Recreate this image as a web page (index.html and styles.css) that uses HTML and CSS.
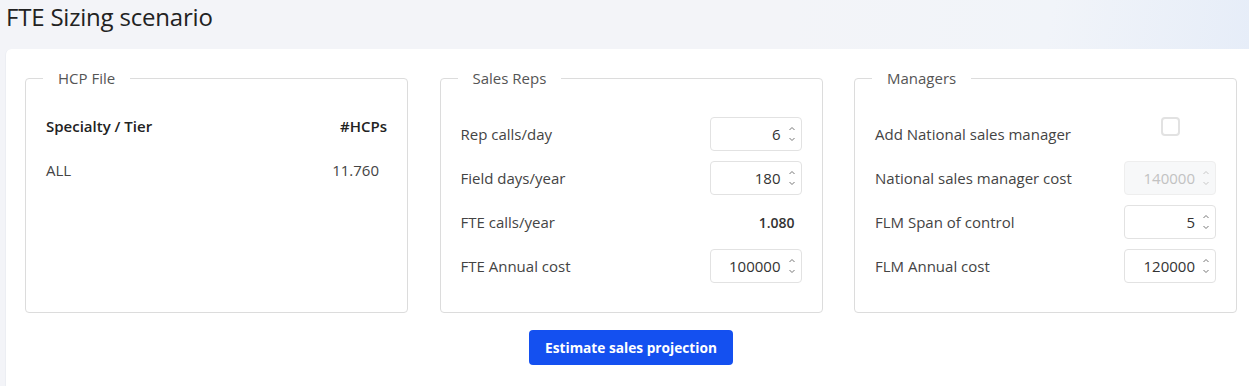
FILE: index.html
```html
<!DOCTYPE html>
<html>
<head>
<meta charset="utf-8">
<link rel="stylesheet" href="styles.css">
</head>
<body>
<div class="page">
  <header class="page-header"><h1 class="title">FTE Sizing scenario</h1></header>
  <main class="card">
    <div class="groups">
      <fieldset class="group">
        <legend class="legend">HCP File</legend>
        <div class="hcp">
          <div class="hcp-row hcp-head"><span>Specialty / Tier</span><span>#HCPs</span></div>
          <div class="hcp-row"><span>ALL</span><span class="hcp-num">11.760</span></div>
        </div>
      </fieldset>
      <fieldset class="group">
        <legend class="legend">Sales Reps</legend>
        <div class="rows">
          <div class="row"><span class="label">Rep calls/day</span><div class="num-input"><span class="val">6</span><span class="spin"><svg viewBox="0 0 8 20" width="8" height="20"><path d="M1.5 6 L4 3.5 L6.5 6" /><path d="M1.5 14 L4 16.5 L6.5 14" /></svg></span></div></div>
          <div class="row"><span class="label">Field days/year</span><div class="num-input"><span class="val">180</span><span class="spin"><svg viewBox="0 0 8 20" width="8" height="20"><path d="M1.5 6 L4 3.5 L6.5 6" /><path d="M1.5 14 L4 16.5 L6.5 14" /></svg></span></div></div>
          <div class="row"><span class="label">FTE calls/year</span><span class="static-val">1.080</span></div>
          <div class="row"><span class="label">FTE Annual cost</span><div class="num-input"><span class="val">100000</span><span class="spin"><svg viewBox="0 0 8 20" width="8" height="20"><path d="M1.5 6 L4 3.5 L6.5 6" /><path d="M1.5 14 L4 16.5 L6.5 14" /></svg></span></div></div>
        </div>
      </fieldset>
      <fieldset class="group">
        <legend class="legend">Managers</legend>
        <div class="rows">
          <div class="row"><span class="label">Add National sales manager</span><div class="check-cell"><span class="checkbox"></span></div></div>
          <div class="row"><span class="label">National sales manager cost</span><div class="num-input disabled"><span class="val">140000</span><span class="spin"><svg viewBox="0 0 8 20" width="8" height="20"><path d="M1.5 6 L4 3.5 L6.5 6" /><path d="M1.5 14 L4 16.5 L6.5 14" /></svg></span></div></div>
          <div class="row"><span class="label">FLM Span of control</span><div class="num-input"><span class="val">5</span><span class="spin"><svg viewBox="0 0 8 20" width="8" height="20"><path d="M1.5 6 L4 3.5 L6.5 6" /><path d="M1.5 14 L4 16.5 L6.5 14" /></svg></span></div></div>
          <div class="row"><span class="label">FLM Annual cost</span><div class="num-input"><span class="val">120000</span><span class="spin"><svg viewBox="0 0 8 20" width="8" height="20"><path d="M1.5 6 L4 3.5 L6.5 6" /><path d="M1.5 14 L4 16.5 L6.5 14" /></svg></span></div></div>
        </div>
      </fieldset>
    </div>
    <div class="actions"><button class="btn-primary">Estimate sales projection</button></div>
  </main>
</div>
</body>
</html>
```
FILE: styles.css
```css
* { box-sizing: border-box; }
html, body { margin: 0; padding: 0; }
body {
  width: 1249px;
  height: 386px;
  overflow: hidden;
  font-family: "Open Sans", "DejaVu Sans", sans-serif;
  color: #333;
  background: linear-gradient(100deg, #f3f4f8 0%, #f3f4f8 60%, #f1f4f9 80%, #e3ebf8 100%);
}
.page { padding-left: 5px; }
.page-header { height: 49px; }
.title {
  margin: 0;
  padding: 1px 0 0 1px;
  font-size: 24px;
  font-weight: 500;
  color: #222;
  letter-spacing: -0.2px;
  line-height: 32px;
}
.card {
  width: 1260px;
  height: 340px;
  background: #fff;
  border-left: 1px solid #eceef3;
  border-top-left-radius: 6px;
  padding: 19px 28px 0 19px;
}
.groups {
  display: grid;
  grid-template-columns: repeat(3, 383px);
  column-gap: 31.5px;
}
.group {
  margin: 0;
  padding: 0 20px 28px 20px;
  border: 1px solid #dcdcdc;
  border-radius: 4px;
  height: 245px;
  min-width: 0;
}
.legend {
  margin-left: -3px;
  padding: 0 15px;
  font-size: 15px;
  line-height: 20px;
  color: #555;
}
.hcp { padding-top: 16px; }
.hcp-row {
  display: flex;
  justify-content: space-between;
  align-items: center;
  height: 44px;
  font-size: 15px;
  color: #444;
}
.hcp-head { font-weight: 600; color: #222; font-size: 15px; }
.hcp-num { padding-right: 8px; }
.rows { padding-top: 29px; display: flex; flex-direction: column; gap: 10px; }
.row {
  display: flex;
  justify-content: space-between;
  align-items: center;
  height: 34px;
}
.label { font-size: 15px; color: #444; }
.static-val { font-size: 14px; font-weight: 600; color: #333; padding-right: 7px; }
.num-input {
  width: 92px;
  height: 34px;
  border: 1px solid #e2e2e2;
  border-radius: 4px;
  display: flex;
  align-items: center;
  justify-content: flex-end;
  padding-right: 5px;
  background: #fff;
}
.num-input .val { font-size: 15px; color: #333; }
.spin { display: flex; margin-left: 7px; }
.spin svg path { fill: none; stroke: #777; stroke-width: 1; }
.num-input.disabled { background: #f7f8f9; border-color: #eeeeee; }
.num-input.disabled .val { color: #c2c2c2; }
.num-input.disabled .spin svg path { stroke: #c8c8c8; }
.check-cell { width: 92px; height: 34px; display: flex; justify-content: center; align-items: flex-start; }
.checkbox {
  width: 19px; height: 19px;
  margin-top: 0;
  border: 2px solid #e2e2e2;
  border-radius: 4px;
  background: #fff;
}
.actions { display: flex; justify-content: center; padding-top: 17px; }
.btn-primary {
  width: 204px;
  height: 35px;
  border: none;
  border-radius: 4px;
  background: #1450f0;
  color: #fff;
  font-family: inherit;
  font-size: 13.7px;
  font-weight: 700;
  cursor: pointer;
}
```
